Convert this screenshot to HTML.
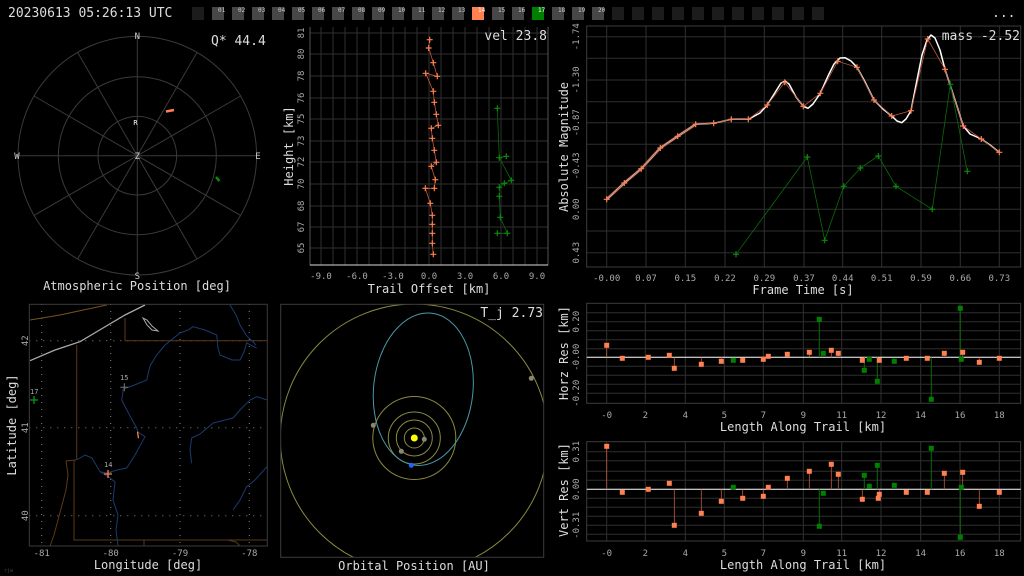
<!DOCTYPE html>
<html><head><meta charset="utf-8"><style>
html,body{margin:0;padding:0;background:#000;width:1024px;height:576px;overflow:hidden}
svg{display:block;font-family:"DejaVu Sans Mono","Liberation Mono",monospace}
.t{fill:#aaa;font-size:9px}
.a{fill:#ddd;font-size:12px}
.g{stroke:#2f2f2f;stroke-width:1;fill:none}
.bx{stroke:#3c3c3c;fill:none}
</style></head><body>
<svg width="1024" height="576" viewBox="0 0 1024 576">
<defs>
<path id="pr" d="M-3 0H3M0 -3V3" stroke="#ff8050" stroke-width="1.2"/>
<path id="pg" d="M-3 0H3M0 -3V3" stroke="#0a8a0a" stroke-width="1.2"/>
<rect id="sr" x="-2.5" y="-2.5" width="5" height="5" fill="#ff8050"/>
<rect id="sg" x="-2.5" y="-2.5" width="5" height="5" fill="#008000"/>
</defs>

<!-- top bar -->
<text x="8" y="17" fill="#ddd" font-size="13">20230613 05:26:13 UTC</text>
<g id="bar">
<rect x="192" y="7" width="12" height="13" fill="#1c1c1c"/>
<rect x="212" y="7" width="12" height="13" fill="#474747"/><rect x="232" y="7" width="12" height="13" fill="#474747"/>
<rect x="252" y="7" width="12" height="13" fill="#474747"/><rect x="272" y="7" width="12" height="13" fill="#474747"/>
<rect x="292" y="7" width="12" height="13" fill="#474747"/><rect x="312" y="7" width="12" height="13" fill="#474747"/>
<rect x="332" y="7" width="12" height="13" fill="#474747"/><rect x="352" y="7" width="12" height="13" fill="#474747"/>
<rect x="372" y="7" width="12" height="13" fill="#474747"/><rect x="392" y="7" width="12" height="13" fill="#474747"/>
<rect x="412" y="7" width="12" height="13" fill="#474747"/><rect x="432" y="7" width="12" height="13" fill="#474747"/>
<rect x="452" y="7" width="12" height="13" fill="#474747"/><rect x="472" y="7" width="12" height="13" fill="#ff8050"/>
<rect x="492" y="7" width="12" height="13" fill="#474747"/><rect x="512" y="7" width="12" height="13" fill="#474747"/>
<rect x="532" y="7" width="12" height="13" fill="#008000"/><rect x="552" y="7" width="12" height="13" fill="#474747"/>
<rect x="572" y="7" width="12" height="13" fill="#474747"/><rect x="592" y="7" width="12" height="13" fill="#474747"/>
<rect x="612" y="7" width="12" height="13" fill="#1c1c1c"/><rect x="632" y="7" width="12" height="13" fill="#1c1c1c"/>
<rect x="652" y="7" width="12" height="13" fill="#1c1c1c"/><rect x="672" y="7" width="12" height="13" fill="#1c1c1c"/>
<rect x="692" y="7" width="12" height="13" fill="#1c1c1c"/><rect x="712" y="7" width="12" height="13" fill="#1c1c1c"/>
<rect x="732" y="7" width="12" height="13" fill="#1c1c1c"/><rect x="752" y="7" width="12" height="13" fill="#1c1c1c"/>
<rect x="772" y="7" width="12" height="13" fill="#1c1c1c"/><rect x="792" y="7" width="12" height="13" fill="#1c1c1c"/>
<rect x="812" y="7" width="12" height="13" fill="#1c1c1c"/>
</g>
<g fill="#ccc" font-size="6">
<text x="218" y="12">01</text><text x="238" y="12">02</text><text x="258" y="12">03</text><text x="278" y="12">04</text><text x="298" y="12">05</text><text x="318" y="12">06</text><text x="338" y="12">07</text><text x="358" y="12">08</text><text x="378" y="12">09</text><text x="398" y="12">10</text><text x="418" y="12">11</text><text x="438" y="12">12</text><text x="458" y="12">13</text><text x="478" y="12" fill="#fff">14</text><text x="498" y="12">15</text><text x="518" y="12">16</text><text x="538" y="12" fill="#fff">17</text><text x="558" y="12">18</text><text x="578" y="12">19</text><text x="598" y="12">20</text>
</g>
<text x="992" y="17" fill="#ddd" font-size="13">...</text>

<!-- polar -->
<g stroke="#3a3a3a" fill="none">
<circle cx="137.3" cy="155.7" r="39.3"/><circle cx="137.3" cy="155.7" r="79"/><circle cx="137.3" cy="155.7" r="119.3"/>
<path d="M137.3 36.4V275M18 155.7H256.6M197 52.4L77.6 259M240.6 96L34 215.4M240.6 215.4L34 96M197 259L77.6 52.4"/>
</g>
<g fill="#ccc" font-size="9" text-anchor="middle">
<text x="137.3" y="39">N</text><text x="137.3" y="279">S</text><text x="17" y="159">W</text><text x="258" y="159">E</text><text x="137.3" y="159">Z</text>
<text x="135.5" y="125" fill="#fff" font-size="7">R</text>
</g>
<path d="M166 111.5L174 110" stroke="#ff8050" stroke-width="2.5"/>
<path d="M216 177L219.5 181" stroke="#0a8a0a" stroke-width="2.5"/>
<text x="211" y="45" fill="#ddd" font-size="13">Q* 44.4</text>
<text x="137" y="290" class="a" text-anchor="middle">Atmospheric Position [deg]</text>

<!-- trail panel -->
<g class="g">
<path d="M321 27V265M333 27V265M345 27V265M357 27V265M369 27V265M381 27V265M393 27V265M405 27V265M417 27V265M429 27V265M441 27V265M453 27V265M465 27V265M477 27V265M489 27V265M501 27V265M513 27V265M525 27V265M537 27V265"/>
<path d="M310 33H548M310 54H548M310 76H548M310 98H548M310 119H548M310 141H548M310 162H548M310 184H548M310 206H548M310 227H548M310 248H548"/>
</g>
<path d="M310 27V265H548V27" stroke="#555" fill="none"/>
<path d="M310 265H548" stroke="#ddd"/>
<g class="t" text-anchor="middle">
<text x="321" y="279">-9.0</text><text x="357" y="279">-6.0</text><text x="393" y="279">-3.0</text><text x="429" y="279">0.0</text><text x="465" y="279">3.0</text><text x="501" y="279">6.0</text><text x="537" y="279">9.0</text>
</g>
<g class="t" text-anchor="middle">
<text transform="translate(304,33) rotate(-90)">81</text><text transform="translate(304,54) rotate(-90)">80</text><text transform="translate(304,76) rotate(-90)">78</text><text transform="translate(304,98) rotate(-90)">76</text><text transform="translate(304,119) rotate(-90)">75</text><text transform="translate(304,141) rotate(-90)">73</text><text transform="translate(304,162) rotate(-90)">72</text><text transform="translate(304,184) rotate(-90)">70</text><text transform="translate(304,206) rotate(-90)">68</text><text transform="translate(304,227) rotate(-90)">67</text><text transform="translate(304,248) rotate(-90)">65</text>
</g>
<text transform="translate(293,146) rotate(-90)" class="a" text-anchor="middle">Height [km]</text>
<text x="429" y="293" class="a" text-anchor="middle">Trail Offset [km]</text>
<text x="547" y="40" fill="#ddd" font-size="13" text-anchor="end">vel 23.8</text>
<polyline fill="none" stroke="#c0583a" stroke-width="0.8" points="429.7,39.7 428.7,48 433.3,62.7 437.3,76.3 425.7,73.3 433.3,91.3 434.3,102.3 436.3,114.3 438.3,125.3 431.3,128.3 432.3,138.3 434.3,150.3 436.3,162.3 431.3,166.3 435.3,179.7 434.3,188.3 425.3,188.3 430.3,203.3 432.3,215.3 432.3,224.3 432.3,233.3 432.3,243.3 433.3,254.3"/>
<g>
<use href="#pr" x="429.7" y="39.7"/><use href="#pr" x="428.7" y="48"/><use href="#pr" x="433.3" y="62.7"/><use href="#pr" x="437.3" y="76.3"/><use href="#pr" x="425.7" y="73.3"/><use href="#pr" x="433.3" y="91.3"/><use href="#pr" x="434.3" y="102.3"/><use href="#pr" x="436.3" y="114.3"/><use href="#pr" x="438.3" y="125.3"/><use href="#pr" x="431.3" y="128.3"/><use href="#pr" x="432.3" y="138.3"/><use href="#pr" x="434.3" y="150.3"/><use href="#pr" x="436.3" y="162.3"/><use href="#pr" x="431.3" y="166.3"/><use href="#pr" x="435.3" y="179.7"/><use href="#pr" x="434.3" y="188.3"/><use href="#pr" x="425.3" y="188.3"/><use href="#pr" x="430.3" y="203.3"/><use href="#pr" x="432.3" y="215.3"/><use href="#pr" x="432.3" y="224.3"/><use href="#pr" x="432.3" y="233.3"/><use href="#pr" x="432.3" y="243.3"/><use href="#pr" x="433.3" y="254.3"/>
</g>
<polyline fill="none" stroke="#0a6a0a" stroke-width="0.8" points="497.3,108.3 499.3,157.7 506.3,156.3 499.3,157.7 511.3,180.3 504.3,183.3 499.3,187.3 499.3,196.3 500.3,217.3 507.3,233.3 497.3,233.3"/>
<g>
<use href="#pg" x="497.3" y="108.3"/><use href="#pg" x="506.3" y="156.3"/><use href="#pg" x="499.3" y="157.7"/><use href="#pg" x="511.3" y="180.3"/><use href="#pg" x="504.3" y="183.3"/><use href="#pg" x="499.3" y="187.3"/><use href="#pg" x="499.3" y="196.3"/><use href="#pg" x="500.3" y="217.3"/><use href="#pg" x="507.3" y="233.3"/><use href="#pg" x="497.3" y="233.3"/>
</g>

<!-- light curve -->
<g class="g">
<path d="M606.7 26V267M646 26V267M685.3 26V267M725 26V267M764.3 26V267M804 26V267M842.7 26V267M881.7 26V267M921 26V267M960.3 26V267M999.3 26V267"/>
<path d="M586.7 36.7H1020.7M586.7 58.3H1020.7M586.7 80H1020.7M586.7 101.7H1020.7M586.7 122.7H1020.7M586.7 144.3H1020.7M586.7 166H1020.7M586.7 187.7H1020.7M586.7 209.3H1020.7M586.7 231H1020.7M586.7 252.7H1020.7"/>
</g>
<rect x="586.7" y="26" width="434" height="241" class="bx"/>
<g class="t" text-anchor="middle">
<text x="606.7" y="281">-0.00</text><text x="646" y="281">0.07</text><text x="685.3" y="281">0.15</text><text x="725" y="281">0.22</text><text x="764.3" y="281">0.29</text><text x="804" y="281">0.37</text><text x="842.7" y="281">0.44</text><text x="881.7" y="281">0.51</text><text x="921" y="281">0.59</text><text x="960.3" y="281">0.66</text><text x="999.3" y="281">0.73</text>
<text transform="translate(579,36.7) rotate(-90)">-1.74</text><text transform="translate(579,80) rotate(-90)">-1.30</text><text transform="translate(579,122.7) rotate(-90)">-0.87</text><text transform="translate(579,166) rotate(-90)">-0.43</text><text transform="translate(579,209.3) rotate(-90)">0.00</text><text transform="translate(579,252.7) rotate(-90)">0.43</text>
</g>
<text transform="translate(568,147) rotate(-90)" class="a" text-anchor="middle">Absolute Magnitude</text>
<text x="803" y="294" class="a" text-anchor="middle">Frame Time [s]</text>
<polyline fill="none" stroke="#7a3a22" stroke-width="3" points="606.7,199.3 624.3,183 641.3,168.7 660.3,148 677.7,136.3 695.7,124.3"/>
<polyline fill="none" stroke="#fff" stroke-width="1.5" stroke-linejoin="round" points="606.7,199.3 624.3,183 641.3,168.7 660.3,148 677.7,136.3 695.7,124.3 713.7,123.3 731.3,119.3 748.3,119.3 760,113 767.3,105 776,91 781,83 785,81 789,84 796,97 803.3,106.3 808,108.3 813,104 820.3,93.3 828,76 834,64 840,58 845,57.7 851,61 857,67.3 864,80 874,100 883,109 891.7,116 897,121 901.7,122.7 906,119 911,110.7 917,80 922,55 927,40 931,35 935,38 940,50 945,69.3 955,100 963.3,126 970,134 981.3,139 990,145 999.3,152.3"/>
<polyline fill="none" stroke="#c0583a" stroke-width="0.8" points="606.7,199.3 624.3,183 641.3,168.7 660.3,148 677.7,136.3 695.7,124.3 713.7,123.3 731.3,119.3 748.3,119.3 767.3,105 784.7,82.3 803.3,106.3 820.3,93.3 837.7,61.3 857,67.3 874,100 891.7,116 911,110.7 927.7,39 945,69.3 963.3,126 981.3,139 999.3,152.3"/>
<g>
<use href="#pr" x="606.7" y="199.3"/><use href="#pr" x="624.3" y="183"/><use href="#pr" x="641.3" y="168.7"/><use href="#pr" x="660.3" y="148"/><use href="#pr" x="677.7" y="136.3"/><use href="#pr" x="695.7" y="124.3"/><use href="#pr" x="713.7" y="123.3"/><use href="#pr" x="731.3" y="119.3"/><use href="#pr" x="748.3" y="119.3"/><use href="#pr" x="767.3" y="105"/><use href="#pr" x="784.7" y="82.3"/><use href="#pr" x="803.3" y="106.3"/><use href="#pr" x="820.3" y="93.3"/><use href="#pr" x="837.7" y="61.3"/><use href="#pr" x="857" y="67.3"/><use href="#pr" x="874" y="100"/><use href="#pr" x="891.7" y="116"/><use href="#pr" x="911" y="110.7"/><use href="#pr" x="927.7" y="39"/><use href="#pr" x="945" y="69.3"/><use href="#pr" x="963.3" y="126"/><use href="#pr" x="981.3" y="139"/><use href="#pr" x="999.3" y="152.3"/>
</g>
<polyline fill="none" stroke="#0a6a0a" stroke-width="0.8" points="736,254.3 807.3,157 824.7,240.3 843.7,186.3 860.3,168 878.3,156 896,186.3 932.3,209.3 950.3,84.3 967.3,171.3"/>
<g>
<use href="#pg" x="736" y="254.3"/><use href="#pg" x="807.3" y="157"/><use href="#pg" x="824.7" y="240.3"/><use href="#pg" x="843.7" y="186.3"/><use href="#pg" x="860.3" y="168"/><use href="#pg" x="878.3" y="156"/><use href="#pg" x="896" y="186.3"/><use href="#pg" x="932.3" y="209.3"/><use href="#pg" x="950.3" y="84.3"/><use href="#pg" x="967.3" y="171.3"/>
</g>
<text x="1020" y="40" fill="#ddd" font-size="13" text-anchor="end">mass -2.52</text>

<!-- horz residuals -->
<g class="g">
<path d="M606.7 303V403M645.3 303V403M685.3 303V403M724.3 303V403M763.3 303V403M803.3 303V403M841.7 303V403M881 303V403M920.7 303V403M960 303V403M999.3 303V403"/>
<path d="M586.7 312.7H1020.7M586.7 321.7H1020.7M586.7 330.7H1020.7M586.7 339.7H1020.7M586.7 348.7H1020.7M586.7 366.3H1020.7M586.7 375.3H1020.7M586.7 384.3H1020.7M586.7 393.3H1020.7"/>
</g>
<rect x="586.7" y="303.3" width="434" height="100" class="bx"/>
<path d="M586.7 357.3H1020.7" stroke="#fff"/>
<g class="t" text-anchor="middle">
<text x="606.7" y="418">-0</text><text x="645.3" y="418">2</text><text x="685.3" y="418">4</text><text x="724.3" y="418">5</text><text x="763.3" y="418">7</text><text x="803.3" y="418">9</text><text x="841.7" y="418">11</text><text x="881" y="418">12</text><text x="920.7" y="418">14</text><text x="960" y="418">16</text><text x="999.3" y="418">18</text>
<text transform="translate(579,321.7) rotate(-90)">0.20</text><text transform="translate(579,357.3) rotate(-90)">-0.00</text><text transform="translate(579,393.3) rotate(-90)">-0.20</text>
</g>
<text transform="translate(568,353) rotate(-90)" class="a" text-anchor="middle">Horz Res [km]</text>
<text x="803" y="431" class="a" text-anchor="middle">Length Along Trail [km]</text>
<g stroke="#c0583a" stroke-width="0.8">
<path d="M606.7 357.3V345.3M674.3 357.3V368.3M701.3 357.3V364.3M721.3 357.3V361.3M809.3 357.3V352.3M831.3 357.3V350.3M838.3 357.3V353.3M944.3 357.3V353.3M962.7 357.3V352.3M979.3 357.3V362.3"/>
</g>
<g stroke="#0a6a0a" stroke-width="1">
<path d="M819.3 357.3V319.3M864.3 357.3V370.3M877.3 357.3V381.3M931.3 357.3V399.3M960.3 357.3V308.3"/>
</g>
<g>
<use href="#sr" x="606.7" y="345.3"/><use href="#sr" x="622.3" y="358.3"/><use href="#sr" x="648.3" y="357.3"/><use href="#sr" x="669.3" y="355.3"/><use href="#sr" x="674.3" y="368.3"/><use href="#sr" x="701.3" y="364.3"/><use href="#sr" x="721.3" y="361.3"/><use href="#sr" x="742.7" y="360.3"/><use href="#sr" x="763.3" y="359.3"/><use href="#sr" x="768.3" y="356.3"/><use href="#sr" x="787.3" y="354.3"/><use href="#sr" x="809.3" y="352.3"/><use href="#sr" x="831.3" y="350.3"/><use href="#sr" x="838.3" y="353.3"/><use href="#sr" x="862.3" y="360.3"/><use href="#sr" x="879.3" y="360.3"/><use href="#sr" x="906.3" y="358.3"/><use href="#sr" x="927.3" y="358.3"/><use href="#sr" x="944.3" y="353.3"/><use href="#sr" x="962.7" y="352.3"/><use href="#sr" x="979.3" y="362.3"/><use href="#sr" x="999.3" y="358.3"/>
<use href="#sg" x="733.3" y="360.3"/><use href="#sg" x="819.3" y="319.3"/><use href="#sg" x="823.3" y="353.3"/><use href="#sg" x="864.3" y="370.3"/><use href="#sg" x="869.3" y="359.3"/><use href="#sg" x="877.3" y="381.3"/><use href="#sg" x="894.3" y="361.3"/><use href="#sg" x="931.3" y="399.3"/><use href="#sg" x="960.3" y="308.3"/><use href="#sg" x="961.3" y="359.3"/>
</g>

<!-- vert residuals -->
<g class="g">
<path d="M606.7 441.7V541M645.3 441.7V541M685.3 441.7V541M724.3 441.7V541M763.3 441.7V541M803.3 441.7V541M841.7 441.7V541M881 441.7V541M920.7 441.7V541M960 441.7V541M999.3 441.7V541"/>
<path d="M586.7 451.7H1020.7M586.7 460.7H1020.7M586.7 471.3H1020.7M586.7 480.3H1020.7M586.7 498.3H1020.7M586.7 507.3H1020.7M586.7 516.3H1020.7M586.7 525.3H1020.7M586.7 534.3H1020.7"/>
</g>
<rect x="586.7" y="441.7" width="434" height="99.3" class="bx"/>
<path d="M586.7 489.3H1020.7" stroke="#fff"/>
<g class="t" text-anchor="middle">
<text x="606.7" y="556">-0</text><text x="645.3" y="556">2</text><text x="685.3" y="556">4</text><text x="724.3" y="556">5</text><text x="763.3" y="556">7</text><text x="803.3" y="556">9</text><text x="841.7" y="556">11</text><text x="881" y="556">12</text><text x="920.7" y="556">14</text><text x="960" y="556">16</text><text x="999.3" y="556">18</text>
<text transform="translate(579,451.7) rotate(-90)">0.31</text><text transform="translate(579,489.3) rotate(-90)">0.00</text><text transform="translate(579,525.3) rotate(-90)">-0.31</text>
</g>
<text transform="translate(568,490) rotate(-90)" class="a" text-anchor="middle">Vert Res [km]</text>
<text x="803" y="569" class="a" text-anchor="middle">Length Along Trail [km]</text>
<g stroke="#c0583a" stroke-width="0.8">
<path d="M606.7 489.3V446.3M674.3 489.3V525.3M701.3 489.3V513.3M721.3 489.3V501.3M742.7 489.3V498.3M763.3 489.3V496.3M787.3 489.3V478.3M809.3 489.3V471.3M831.3 489.3V464.3M838.3 489.3V474.3M862.3 489.3V499.3M879.3 489.3V498.3M944.3 489.3V473.3M962.7 489.3V472.3M979.3 489.3V506.3"/>
</g>
<g stroke="#0a6a0a" stroke-width="1">
<path d="M819.3 489.3V526.3M864.3 489.3V475.3M877.3 489.3V465.3M931.3 489.3V448.3M960.3 489.3V537.3"/>
</g>
<g>
<use href="#sr" x="606.7" y="446.3"/><use href="#sr" x="622.3" y="492.3"/><use href="#sr" x="648.3" y="489.3"/><use href="#sr" x="669.3" y="483.3"/><use href="#sr" x="674.3" y="525.3"/><use href="#sr" x="701.3" y="513.3"/><use href="#sr" x="721.3" y="501.3"/><use href="#sr" x="742.7" y="498.3"/><use href="#sr" x="763.3" y="496.3"/><use href="#sr" x="768.3" y="487.3"/><use href="#sr" x="787.3" y="478.3"/><use href="#sr" x="809.3" y="471.3"/><use href="#sr" x="831.3" y="464.3"/><use href="#sr" x="838.3" y="474.3"/><use href="#sr" x="862.3" y="499.3"/><use href="#sr" x="879.3" y="494.3"/><use href="#sr" x="878.3" y="498.3"/><use href="#sr" x="906.3" y="492.3"/><use href="#sr" x="927.3" y="492.3"/><use href="#sr" x="944.3" y="473.3"/><use href="#sr" x="962.7" y="472.3"/><use href="#sr" x="979.3" y="506.3"/><use href="#sr" x="999.3" y="492.3"/>
<use href="#sg" x="733.3" y="487.3"/><use href="#sg" x="819.3" y="526.3"/><use href="#sg" x="823.3" y="493.3"/><use href="#sg" x="864.3" y="475.3"/><use href="#sg" x="869.3" y="486.3"/><use href="#sg" x="877.3" y="465.3"/><use href="#sg" x="894.3" y="485.3"/><use href="#sg" x="931.3" y="448.3"/><use href="#sg" x="960.3" y="537.3"/><use href="#sg" x="961.3" y="487.3"/>
</g>

<!-- map -->
<g stroke="#888" stroke-dasharray="1,6" fill="none">
<path d="M29.3 340.7H267.3M29.3 427.7H267.3M29.3 515.7H267.3M41.7 304V546M110.7 304V546M180 304V546M249.3 304V546"/>
</g>
<g fill="none" stroke-width="1">
<path d="M30 320L60 315L106.7 305" stroke="#7a5218"/>
<path d="M30 360.7L55 350L80 341.7L103 328L125 315L145 305" stroke="#aaa" stroke-width="1.3"/>
<path d="M143 318L147 325L152 330L158 331L152 326L147 320Z" stroke="#aaa"/>
<path d="M125 318V340.7H267" stroke="#5a3a12"/>
<path d="M76.7 345V460M74 460V540H267.3M144 540V546" stroke="#5a3a12"/>
<path d="M76 460L66 461L68 475L66 490L62 505L58 520L54 535L50 546" stroke="#5a3a12"/>
<path d="M228 540L236 542L240 546" stroke="#5a3a12"/>
<path d="M118 546L116 530L118 515L113 500L115 482L110 478L100 471.7L92 458L85 455L76.7 460M100 471.7L106.7 473L117 470L126.7 468L135 455L145 436.7L138 432L136.7 428L130 416L121.7 400L123.3 389L132 386L146.7 380L150 366L156.7 355L165 345L180 333L188 330L193 326.7L205 330L216.7 335L218 348L220 355L232 360L240 360L244 352L246.7 343L256.7 348" stroke="#1c3a6e"/>
<path d="M230 305L236 315L240 325L246 335L256 345" stroke="#1c3a6e"/>
<path d="M191.7 463.3L190 450L191.7 438L200 434L213.3 423L225 420L233 418L240 410L250 400L256.7 396.7L267.3 400" stroke="#1c3a6e"/>
<path d="M233 510L240 500L246.7 486.7L255 480L267 466.7" stroke="#1c3a6e"/>
</g>
<rect x="29.3" y="304.3" width="238" height="241.7" fill="none" stroke="#3c3c3c"/>
<path d="M30 400H38M34 396V404" stroke="#0a9a0a" stroke-width="1.3"/>
<text x="30" y="394" fill="#aaa" font-size="7">17</text>
<path d="M120.3 387.3H128.3M124.3 383.3V391.3" stroke="#777" stroke-width="1"/>
<text x="120" y="380" fill="#aaa" font-size="7">15</text>
<path d="M104 474H112M108 470V478" stroke="#ff8050" stroke-width="1.3"/>
<text x="104" y="467" fill="#aaa" font-size="7">14</text>
<path d="M137.5 431.7L138.5 438.3" stroke="#ff8050" stroke-width="1.3"/>
<g class="t" text-anchor="middle">
<text x="41.7" y="556">-81</text><text x="110.7" y="556">-80</text><text x="180" y="556">-79</text><text x="249.3" y="556">-78</text>
<text transform="translate(28,340.7) rotate(-90)">42</text><text transform="translate(28,427.7) rotate(-90)">41</text><text transform="translate(28,515.7) rotate(-90)">40</text>
</g>
<text transform="translate(16,425) rotate(-90)" class="a" text-anchor="middle">Latitude [deg]</text>
<text x="148" y="569" class="a" text-anchor="middle">Longitude [deg]</text>

<!-- orbit -->
<svg x="280.7" y="304.3" width="263" height="253" overflow="hidden">
<g transform="translate(-280.7,-304.3)" fill="none" stroke="#8a8a40" stroke-width="1">
<circle cx="414.3" cy="438" r="134"/>
<circle cx="414.3" cy="438" r="41.5"/>
<circle cx="414.3" cy="438" r="26"/>
<circle cx="414.3" cy="438" r="18"/>
<circle cx="414.3" cy="438" r="10"/>
<ellipse cx="423.3" cy="389.2" rx="49.7" ry="76.5" stroke="#4a9aaa" transform="rotate(6 423.3 389.2)"/>
</g>
</svg>
<rect x="280.7" y="304.3" width="263" height="253" fill="none" stroke="#3c3c3c"/>
<circle cx="414.3" cy="438" r="3.5" fill="#ffff00"/>
<circle cx="424.3" cy="439.3" r="2.5" fill="#888870"/>
<circle cx="401.3" cy="451.3" r="2.5" fill="#888870"/>
<circle cx="411.3" cy="465.3" r="2.5" fill="#1a66ff"/>
<circle cx="373.3" cy="425.3" r="2.5" fill="#888870"/>
<circle cx="531.3" cy="378.3" r="2.5" fill="#888870"/>
<text x="543" y="317" fill="#ddd" font-size="13" text-anchor="end">T_j 2.73</text>
<text x="414" y="570" class="a" text-anchor="middle">Orbital Position [AU]</text>
<text x="4" y="572" fill="#444" font-size="5">rjw</text>
</svg>
</body></html>
